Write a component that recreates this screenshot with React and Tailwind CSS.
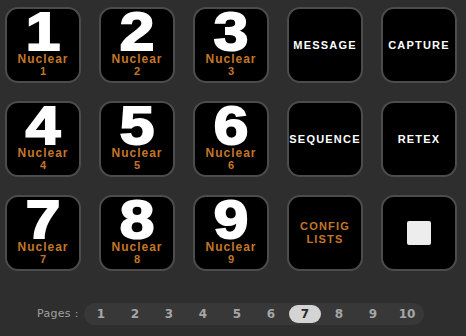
import React from 'react'

const nuclear = [1, 2, 3, 4, 5, 6, 7, 8, 9]

function Key({ children }) {
  return (
    <div className="w-[76px] h-[76px] rounded-[13px] border-2 border-[#4c4c4c] bg-black flex flex-col items-center overflow-visible">
      {children}
    </div>
  )
}

function NuclearKey({ n }) {
  return (
    <Key>
      <div className="mt-[2px] text-[54px] leading-[40px] font-bold text-white scale-x-[1.15] [-webkit-text-stroke:2px_white]">{n}</div>
      <div className="mt-[2px] text-[12px] leading-[12px] font-bold tracking-[1px] text-[#c47628]">Nuclear</div>
      <div className="mt-[1px] text-[11px] leading-[11px] font-bold text-[#c47628]">{n}</div>
    </Key>
  )
}

function LabelKey({ lines, orange }) {
  return (
    <Key>
      <div className={`flex-1 flex flex-col items-center justify-center text-[11px] leading-[13px] font-bold tracking-[1.2px] whitespace-nowrap ${orange ? 'text-[#c47628]' : 'text-white'}`}>
        {lines.map(l => <span key={l}>{l}</span>)}
      </div>
    </Key>
  )
}

export default function App() {
  const row = (i) => nuclear.slice(i * 3, i * 3 + 3).map(n => <NuclearKey key={n} n={n} />)

  return (
    <div className="w-[466px] h-[336px] bg-[#2e2e2e] overflow-hidden font-['Liberation_Sans',Arial,sans-serif]">
      <div className="grid grid-cols-[repeat(5,76px)] gap-[18px] pl-[5px] pt-[7px]">
        {row(0)}
        <LabelKey lines={['MESSAGE']} />
        <LabelKey lines={['CAPTURE']} />
        {row(1)}
        <LabelKey lines={['SEQUENCE']} />
        <LabelKey lines={['RETEX']} />
        {row(2)}
        <LabelKey lines={['CONFIG', 'LISTS']} orange />
        <Key>
          <div className="flex-1 flex items-center justify-center">
            <div className="w-[24px] h-[24px] rounded-[2px] bg-[#ededed]" />
          </div>
        </Key>
      </div>

      <div className="flex items-center mt-[32px] font-['DejaVu_Sans',sans-serif]">
        <span className="ml-[37px] w-[47px] text-[11px] tracking-[0.3px] text-[#a0a0a0]">Pages :</span>
        <div className="flex items-center h-[22px] rounded-full bg-[#383838]">
          {[1, 2, 3, 4, 5, 6, 7, 8, 9, 10].map(p => (
            <div key={p} className="w-[34px] h-[22px] flex items-center justify-center">
              {p === 7 ? (
                <div className="w-[32px] h-[18px] rounded-full bg-[#d4d4d4] flex items-center justify-center text-[12px] font-bold text-[#2a2a2a]">{p}</div>
              ) : (
                <span className="text-[12px] font-bold text-[#a6a6a6]">{p}</span>
              )}
            </div>
          ))}
        </div>
      </div>
    </div>
  )
}
